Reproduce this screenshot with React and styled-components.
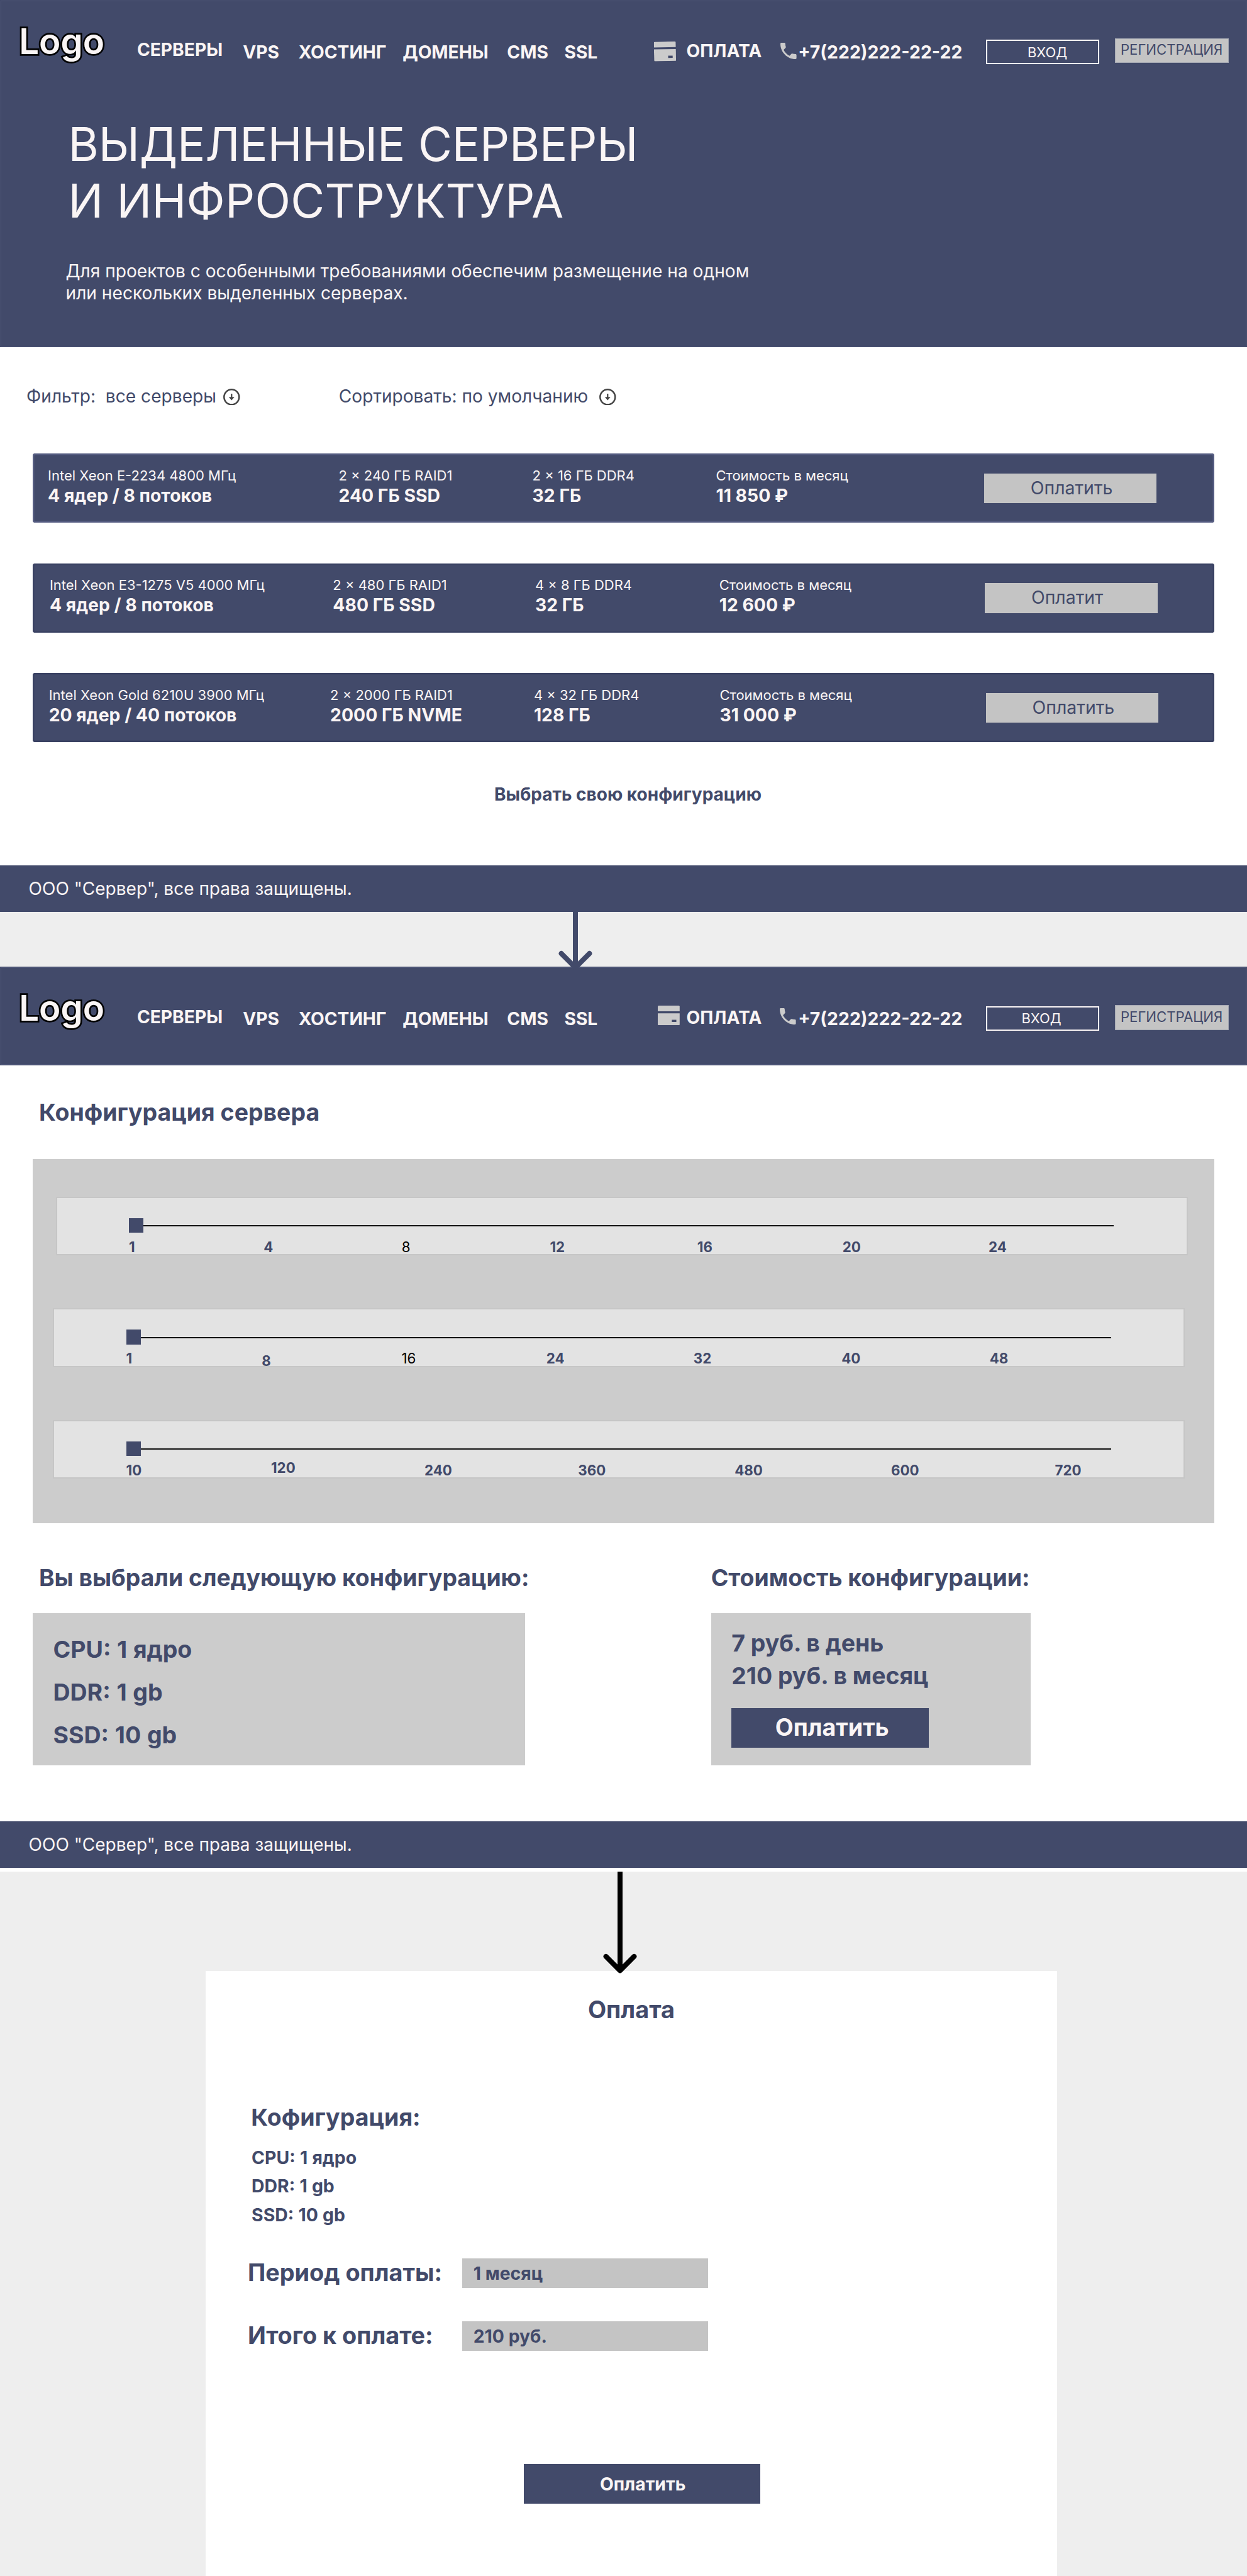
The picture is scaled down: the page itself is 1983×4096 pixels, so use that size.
import React from 'react';
import styled, { createGlobalStyle } from 'styled-components';

const navy = '#424a6a';
const paper = '#faf5f5';

const GlobalStyle = createGlobalStyle`
  * { box-sizing: border-box; }
  body {
    margin: 0;
    background: #eeeeee;
    font-family: Inter, "Liberation Sans", sans-serif;
    line-height: 1.21;
    color: ${navy};
  }
  button { font: inherit; border: 0; border-radius: 0; margin: 0; cursor: pointer; }
`;

const Page = styled.div`
  width: 1983px;
  height: 4096px;
  overflow: hidden;
  display: flex;
  flex-direction: column;
`;

const Screen = styled.section`
  background: #ffffff;
  height: ${p => p.$h}px;
  display: flex;
  flex-direction: column;
  flex: none;
`;

const Banner = styled.div`
  background: ${navy};
  color: ${paper};
  height: ${p => p.$h}px;
  flex: none;
  outline: 1px solid #4c5476;
  outline-offset: -2.5px;
`;

const HeaderBar = styled.header`
  display: grid;
  grid-template-columns: 187.7px 168.3px 88.5px 165.5px 166.2px 91.1px 142.5px 51.6px 149.4px 28.4px 298.5px 205.1px 182px;
  padding-left: 30.2px;
  height: 156.4px;
  align-items: start;
`;

const Logo = styled.div`
  font-size: 56.4px;
  font-weight: 600;
  margin-top: 31.5px;
  -webkit-text-stroke: 5.4px #000;
  paint-order: stroke fill;
`;

const NavLink = styled.a`
  font-size: ${p => p.$size || 28.2}px;
  font-weight: 700;
  white-space: nowrap;
  margin-top: ${p => p.$top}px;
`;

const IconSlot = styled.span`
  display: block;
  line-height: 0;
  margin-top: ${p => p.$top}px;
  margin-left: ${p => p.$left || 0}px;
  transform: rotate(${p => p.$tilt || 0}deg);
`;

const LoginButton = styled.button`
  width: 180.5px;
  height: 39.4px;
  margin-top: 62.6px;
  border: 2px solid ${paper};
  background: transparent;
  color: ${paper};
  font-size: 21.9px;
  text-align: left;
  padding: ${p => p.$padTop}px 0 0 ${p => p.$padLeft}px;
  display: flex;
`;

const RegisterButton = styled.button`
  width: 181px;
  height: 39.4px;
  margin-top: 61.1px;
  background: #c4c4c4;
  box-shadow: inset 0 0 0 1px #a5a8b3;
  color: ${navy};
  font-size: 22.2px;
  padding: 5.4px 0 0 9px;
  display: flex;
`;

const HeroTitle = styled.h1`
  margin: 27.5px 0 0 108.5px;
  font-size: 73.9px;
  line-height: 90.4px;
  font-weight: 400;
  white-space: nowrap;
`;

const TitleLine = styled.span`
  display: block;
  letter-spacing: ${p => p.$track}px;
`;

const HeroText = styled.p`
  margin: 49.5px 0 0 104.5px;
  font-size: 28.13px;
  line-height: 34.6px;
  white-space: nowrap;
`;

const Filters = styled.div`
  display: flex;
  padding: 61.3px 0 0 42px;
  height: 169.5px;
  flex: none;
`;

const Filter = styled.div`
  display: flex;
  align-items: flex-start;
  width: ${p => p.$w}px;
  font-size: 28.12px;
  white-space: pre;
`;

const FilterLabel = styled.span`
  width: ${p => p.$w}px;
`;

const Servers = styled.div`
  display: flex;
  flex-direction: column;
  gap: 64.8px;
  padding-left: 51.9px;
`;

const ServerCard = styled.article`
  display: grid;
  grid-template-columns: ${p => p.$cols.map(c => c + 'px').join(' ')};
  width: 1879.3px;
  height: 109.7px;
  border-radius: 4px;
  background: ${navy};
  color: ${paper};
  box-shadow: inset 0 0 0 2.5px ${p => p.$edge};
  padding-left: ${p => p.$pad}px;
  align-items: start;
`;

const Spec = styled.div`
  display: flex;
  flex-direction: column;
  padding-top: 21.5px;
  gap: 1.4px;
  white-space: nowrap;
`;

const SpecNote = styled.span`
  font-size: 22px;
`;

const SpecValue = styled.strong`
  font-size: 28.35px;
  font-weight: 700;
`;

const RentButton = styled.button`
  display: flex;
  width: 274.6px;
  height: 47.5px;
  margin-top: 31.4px;
  padding: 5.8px 0 0 74px;
  background: #c4c4c4;
  color: ${navy};
  font-size: 28.4px;
`;

const CustomLink = styled.a`
  font-size: 28.02px;
  font-weight: 700;
  margin: 66.6px 0 0 786px;
`;

const FooterBar = styled.footer`
  margin-top: auto;
  height: 73.6px;
  flex: none;
  background: ${navy};
  color: ${paper};
  font-size: 28.03px;
  padding: 20.4px 0 0 45.6px;
`;

const Connector = styled.div`
  height: ${p => p.$h}px;
  flex: none;
  padding-left: ${p => p.$left}px;
  line-height: 0;
  position: relative;
  z-index: 1;
  svg { overflow: visible; }
`;

const Heading = styled.h2`
  margin: ${p => p.$top || 0}px 0 0 ${p => p.$left || 0}px;
  font-size: ${p => p.$size || 37.5}px;
  line-height: 45.4px;
  font-weight: 700;
  white-space: nowrap;
`;

const SliderPanel = styled.div`
  margin: 51.8px 0 0 51.9px;
  width: 1879.3px;
  height: 579.3px;
  flex: none;
  background: #cccccc;
  padding-top: 60.1px;
  display: flex;
  flex-direction: column;
  gap: 84.3px;
`;

const SliderBox = styled.div`
  margin-left: ${p => p.$left}px;
  width: 1800px;
  height: 93.3px;
  background: #e3e3e3;
  border: 2px solid #c6c6c6;
  padding: 31.8px 0 0 114.4px;
`;

const Track = styled.div`
  display: flex;
  align-items: center;
  width: 1566.5px;
  height: 23.5px;
`;

const Thumb = styled.span`
  width: 23.5px;
  height: 23.5px;
  background: ${navy};
`;

const Rail = styled.span`
  flex: 1;
  height: 2px;
  margin-top: 1px;
  background: #111111;
`;

const Ticks = styled.div`
  display: grid;
  grid-template-columns: ${p => p.$cols.map(c => c + 'px').join(' ')};
  padding-top: 9.7px;
`;

const Tick = styled.span`
  font-size: 22.3px;
  font-weight: ${p => (p.$plain ? 400 : 700)};
  color: ${p => (p.$plain ? '#000' : navy)};
  transform: translateY(${p => p.$shift || 0}px);
`;

const Summary = styled.div`
  display: grid;
  grid-template-columns: 1078.8px 1fr;
  padding: 63.7px 0 0 51.9px;
`;

const SummaryBox = styled.div`
  margin-top: 33.5px;
  width: ${p => p.$w}px;
  height: 242.5px;
  background: #cccccc;
  padding: ${p => p.$top}px 0 0 32.5px;
  font-size: ${p => p.$size}px;
  word-spacing: ${p => p.$words || 0}px;
  font-weight: 700;
  line-height: ${p => p.$line}px;
`;

const BuyButton = styled.button`
  display: flex;
  background: ${navy};
  color: ${paper};
  font-weight: 700;
  line-height: 1.21;
  width: ${p => p.$w}px;
  height: 63.1px;
  margin-top: ${p => p.$gap || 0}px;
  font-size: ${p => p.$size}px;
  padding: ${p => p.$top}px 0 0 ${p => p.$left}px;
`;

const Payment = styled.section`
  margin-left: 327.1px;
  width: 1353.5px;
  flex: 1;
  background: #ffffff;
  padding-left: 66.8px;
`;

const ConfigList = styled.div`
  margin: 18.1px 0 0 6.2px;
  font-size: 28.4px;
  word-spacing: 0.5px;
  font-weight: 700;
  line-height: 45.5px;
`;

const FieldRow = styled.div`
  display: grid;
  grid-template-columns: 340.7px 391.7px;
  margin-top: ${p => p.$top}px;
  height: 46.2px;
`;

const Field = styled.div`
  background: #c4c4c4;
  font-size: 28.35px;
  font-weight: 700;
  padding: 6.7px 0 0 18.2px;
`;

const PayRow = styled.div`
  padding: 180px 0 0 438.8px;
`;

function CardIcon() {
  return (
    <svg width="34.8" height="31.4" viewBox="0 0 46.4 41.8" fill="#cbcbcb">
      <path d="M2 0H44.4Q46.4 0 46.4 2V12H0V2Q0 0 2 0Z" />
      <path fillRule="evenodd" d="M0 16.2H46.4V39.8Q46.4 41.8 44.4 41.8H2Q0 41.8 0 39.8ZM29.8 30V34.8H39.4V30Z" />
    </svg>
  );
}

function PhoneIcon() {
  return (
    <svg width="25.6" height="26" viewBox="3 3 18 18" preserveAspectRatio="none" fill="#cbcbcb">
      <path d="M6.62 10.79c1.44 2.83 3.76 5.14 6.59 6.59l2.2-2.2c.27-.27.67-.36 1.02-.24 1.12.37 2.33.57 3.57.57.55 0 1 .45 1 1V20c0 .55-.45 1-1 1-9.39 0-17-7.61-17-17 0-.55.45-1 1-1h3.5c.55 0 1 .45 1 1 0 1.25.2 2.45.57 3.57.11.35.03.74-.25 1.02l-2.2 2.2z" />
    </svg>
  );
}

function DownIcon() {
  return (
    <svg width="26.6" height="26.6" viewBox="0 0 26.6 26.6" fill="none" stroke="#444444">
      <circle cx="13.3" cy="13.3" r="12" strokeWidth="2.5" />
      <path d="M13.3 8V15" strokeWidth="2.2" />
      <path d="M8.8 13.2H17.8L13.3 18.6Z" fill="#444444" stroke="none" />
    </svg>
  );
}

function Arrow({ length, color }) {
  return (
    <svg width="54" height={length} viewBox={`0 0 54 ${length}`} fill="none" stroke={color} strokeWidth="8" strokeLinecap="round" strokeLinejoin="round">
      <path strokeLinecap="butt" d={`M27 0V${length}`} />
      <path d={`M4.6 ${length - 22.4}L27 ${length}L49.4 ${length - 22.4}`} />
    </svg>
  );
}

function Header({ card, phone, login }) {
  return (
    <HeaderBar>
      <Logo>Logo</Logo>
      <NavLink $top={62.4}>СЕРВЕРЫ</NavLink>
      <NavLink $top={65.6}>VPS</NavLink>
      <NavLink $top={65.6}>ХОСТИНГ</NavLink>
      <NavLink $top={65.6}>ДОМЕНЫ</NavLink>
      <NavLink $top={65.6}>CMS</NavLink>
      <NavLink $top={65.6}>SSL</NavLink>
      <IconSlot $top={card.top} $left={card.left} $tilt={card.tilt}><CardIcon /></IconSlot>
      <NavLink $top={64.1}>ОПЛАТА</NavLink>
      <IconSlot $top={phone.top} $left={phone.left}><PhoneIcon /></IconSlot>
      <NavLink $top={65.6} $size={28.45}>+7(222)222-22-22</NavLink>
      <LoginButton $padLeft={login.left} $padTop={login.top}>ВХОД</LoginButton>
      <RegisterButton>РЕГИСТРАЦИЯ</RegisterButton>
    </HeaderBar>
  );
}

const servers = [
  {
    pad: 24.2, cols: [462.4, 308.1, 291.9, 426.3, 275], edge: '#555c81', pay: 'Оплатить',
    specs: [['Intel Xeon E-2234 4800 МГц', '4 ядер / 8 потоков'], ['2 × 240 ГБ RAID1', '240 ГБ SSD'], ['2 × 16 ГБ DDR4', '32 ГБ'], ['Стоимость в месяц', '11 850 ₽']],
  },
  {
    pad: 27, cols: [450.4, 321.6, 292.8, 422.3, 275], edge: '#394162', pay: 'Оплатит',
    specs: [['Intel Xeon E3-1275 V5 4000 МГц', '4 ядер / 8 потоков'], ['2 × 480 ГБ RAID1', '480 ГБ SSD'], ['4 × 8 ГБ DDR4', '32 ГБ'], ['Стоимость в месяц', '12 600 ₽']],
  },
  {
    pad: 25.8, cols: [447.4, 323.8, 295.6, 423.1, 275], edge: '#394162', pay: 'Оплатить',
    specs: [['Intel Xeon Gold 6210U 3900 МГц', '20 ядер / 40 потоков'], ['2 × 2000 ГБ RAID1', '2000 ГБ NVME'], ['4 × 32 ГБ DDR4', '128 ГБ'], ['Стоимость в месяц', '31 000 ₽']],
  },
];

const sliders = [
  { left: 36.7, cols: [214.3, 219.6, 235.6, 234.4, 230.9, 232.3, 90], ticks: [['1'], ['4'], ['8', 0, true], ['12'], ['16'], ['20'], ['24']] },
  { left: 32.3, cols: [215.6, 222.3, 230.4, 233.9, 235.5, 235.4, 90], ticks: [['1'], ['8', 3.9], ['16', 0, true], ['24'], ['32'], ['40'], ['48']] },
  { left: 32.3, cols: [230.4, 244, 244.3, 249, 248.8, 260.5, 90], ticks: [['10'], ['120', -3.9], ['240'], ['360'], ['480'], ['600'], ['720']] },
];

const footerText = 'ООО "Сервер", все права защищены.';

export default function App() {
  return (
    <Page>
      <GlobalStyle />
      <Screen $h={1449.8}>
        <Banner $h={551.9}>
          <Header card={{ top: 65.6, left: 0, tilt: -1 }} phone={{ top: 68.4, left: 0 }} login={{ left: 64.2, top: 5 }} />
          <HeroTitle>
            <TitleLine $track={-0.19}>ВЫДЕЛЕННЫЕ СЕРВЕРЫ</TitleLine>
            <TitleLine $track={0.27}>И ИНФРОСТРУКТУРА</TitleLine>
          </HeroTitle>
          <HeroText>Для проектов с особенными требованиями обеспечим размещение на одном<br />или нескольких выделенных серверах.</HeroText>
        </Banner>
        <Filters>
          <Filter $w={496.8}>
            <FilterLabel $w={313}>{'Фильтр:  все серверы'}</FilterLabel>
            <IconSlot $top={4.5}><DownIcon /></IconSlot>
          </Filter>
          <Filter $w={460}>
            <FilterLabel $w={414.2}>Сортировать: по умолчанию</FilterLabel>
            <IconSlot $top={4.5}><DownIcon /></IconSlot>
          </Filter>
        </Filters>
        <Servers>
          {servers.map((s, i) => (
            <ServerCard key={i} $cols={s.cols} $pad={s.pad} $edge={s.edge}>
              {s.specs.map(([note, value]) => (
                <Spec key={note}>
                  <SpecNote>{note}</SpecNote>
                  <SpecValue>{value}</SpecValue>
                </Spec>
              ))}
              <RentButton>{s.pay}</RentButton>
            </ServerCard>
          ))}
        </Servers>
        <CustomLink>Выбрать свою конфигурацию</CustomLink>
        <FooterBar>{footerText}</FooterBar>
      </Screen>

      <Connector $h={87.6} $left={888.1}><Arrow length={88.5} color={navy} /></Connector>

      <Screen $h={1438.8}>
        <Banner $h={156.4}>
          <Header card={{ top: 61.3, left: 6.4 }} phone={{ top: 65.2, left: -1 }} login={{ left: 54.6, top: 4 }} />
        </Banner>
        <Heading $top={51.8} $left={62} $size={37.45}>Конфигурация сервера</Heading>
        <SliderPanel>
          {sliders.map((s, i) => (
            <SliderBox key={i} $left={s.left}>
              <Track><Thumb /><Rail /></Track>
              <Ticks $cols={s.cols}>
                {s.ticks.map(([label, shift, plain]) => (
                  <Tick key={label} $shift={shift} $plain={plain}>{label}</Tick>
                ))}
              </Ticks>
            </SliderBox>
          ))}
        </SliderPanel>
        <Summary>
          <div>
            <Heading $left={10} $size={37.3}>Вы выбрали следующую конфигурацию:</Heading>
            <SummaryBox $w={783.4} $top={24.4} $line={67.8} $size={37.5} $words={0.8}>
              CPU: 1 ядро<br />DDR: 1 gb<br />SSD: 10 gb
            </SummaryBox>
          </div>
          <div>
            <Heading $size={37.42}>Стоимость конфигурации:</Heading>
            <SummaryBox $w={508.1} $top={22} $line={51.9} $size={37.42}>
              7 руб. в день<br />210 руб. в месяц
              <BuyButton $gap={25.8} $w={313.8} $size={37.6} $top={8.2} $left={69.6}>Оплатить</BuyButton>
            </SummaryBox>
          </div>
        </Summary>
        <FooterBar>{footerText}</FooterBar>
        <Screen $h={6.2} />
      </Screen>

      <Connector $h={158.1} $left={958.9}><Arrow length={157.3} color="#000000" /></Connector>

      <Payment>
        <Heading $top={38.4} $left={541} $size={37.9}>Оплата</Heading>
        <Heading $top={126.3} $left={5.3}>Кофигурация:</Heading>
        <ConfigList>CPU: 1 ядро<br />DDR: 1 gb<br />SSD: 10 gb</ConfigList>
        <FieldRow $top={47.1}>
          <Heading $size={37.8}>Период оплаты:</Heading>
          <Field>1 месяц</Field>
        </FieldRow>
        <FieldRow $top={53.8}>
          <Heading $size={37.8}>Итого к оплате:</Heading>
          <Field>210 руб.</Field>
        </FieldRow>
        <PayRow>
          <BuyButton $w={376.5} $size={28.35} $top={15.8} $left={121.2}>Оплатить</BuyButton>
        </PayRow>
      </Payment>
    </Page>
  );
}
